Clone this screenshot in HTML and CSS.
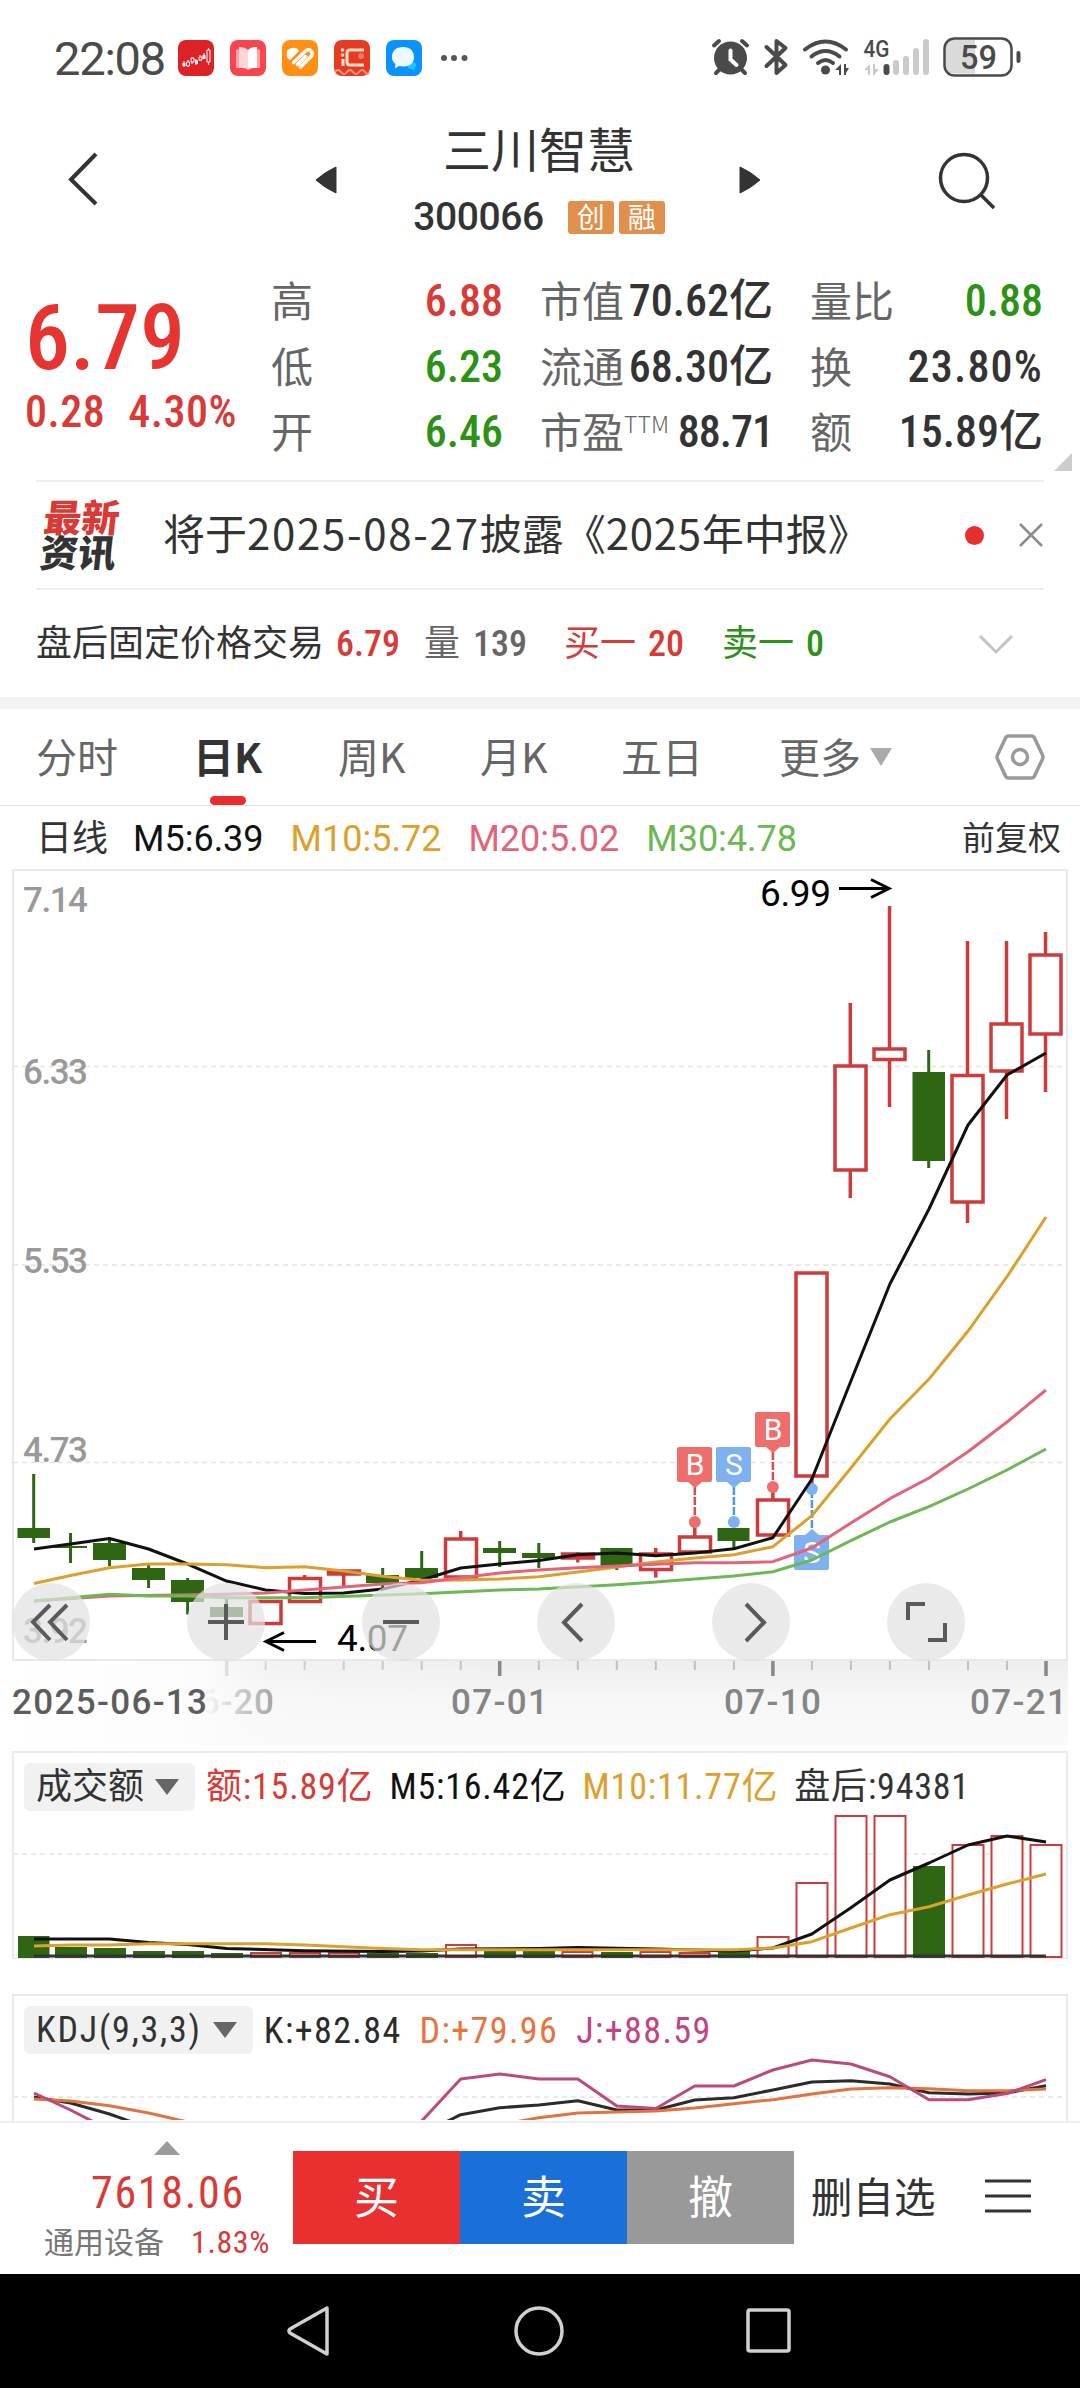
FILE: index.html
```html
<!DOCTYPE html>
<html lang="zh-CN">
<head>
    <meta charset="UTF-8">
    <meta name="viewport" content="width=device-width, initial-scale=1.0">
    <title>三川智慧 300066</title>
    <link rel="stylesheet" href="styles.css">
</head>
<body>

<div class="status-bar">
    <span class="clock">22:08</span>
    <div class="app-icons">
        <svg class="app-icon" viewBox="0 0 36 36">
            <rect width="36" height="36" rx="8" fill="#dc2226"/>
            <path d="M6 21v6M10 20v7M14 17v7M18 19v6M22 15v6M26 13v6M30.500 8v17" stroke="#fff" stroke-width="1"/>
            <path d="M4.500 23h3v3h-3zM17 20h3v4h-3zM24.500 15h3v4h-3z" fill="#fff"/>
            <path d="M8.500 22h3v4h-3zM13 18h3v4h-3zM21 17h3v3h-3zM29 10h3v12h-3z" fill="#dc2226" stroke="#fff" stroke-width="1"/>
        </svg>
        <svg class="app-icon" viewBox="0 0 36 36">
            <rect width="36" height="36" rx="8" fill="#f8454f"/>
            <path d="M6 10l3-1v19h-3zM30 10l-3-1v19h3z" fill="#fba3a8"/>
            <path d="M9 7c4 0 7 1 9 3v20c-2-2-5-2-9-2z" fill="#ffd6d8"/>
            <path d="M27 7c-4 0-7 1-9 3v20c2-2 5-2 9-2z" fill="#fff"/>
        </svg>
        <svg class="app-icon" viewBox="0 0 36 36">
            <rect width="36" height="36" rx="8" fill="#ff9014"/>
            <path d="M5 17Q3 9 10 8Q15 7 17 11L8 20Q6 19 5 17z" fill="#fff"/>
            <path d="M11.500 22.500L23 11.500Q27 8 29.500 11.500Q31 14.500 28.500 17L18.500 27M15.500 24.500L23.500 16.500" fill="none" stroke="#fff" stroke-width="3.500" stroke-linecap="round"/>
        </svg>
        <svg class="app-icon" viewBox="0 0 36 36">
            <rect width="36" height="36" rx="8" fill="#e63a22"/>
            <path d="M1 32q3-4 6 0t6 0t6 0t6 0t6 0t4 0" fill="none" stroke="#f29a80" stroke-width="2"/>
            <path d="M30 10H16q-3 0-3 3v9q0 3 3 3h14M9 19v7" fill="none" stroke="#ffe2c0" stroke-width="3"/>
            <circle cx="8.500" cy="10" r="1.800" fill="#ffe2c0"/>
            <circle cx="8.500" cy="15" r="1.800" fill="#ffe2c0"/>
            <circle cx="27" cy="16" r="3" fill="#ff7658"/>
        </svg>
        <svg class="app-icon" viewBox="0 0 36 36">
            <rect width="36" height="36" rx="8" fill="#0a93ff"/>
            <path d="M22 23q8-2 8 2 0 2-1.500 3l1 2-4-1q-3 0-4-3z" fill="#19c9f5"/>
            <path d="M17 7c7 0 11 4 11 10s-4 9.500-10 9.500l-5-.5-4 2.500 .5-4.500C7 22 6 20 6 17c0-6 4-10 11-10z" fill="#eef8ff"/>
        </svg>
    </div>
    <svg class="more-dots" width="30" height="10" viewBox="0 0 30 10" fill="#555">
        <circle cx="4" cy="5" r="3"/><circle cx="14" cy="5" r="3"/><circle cx="24.500" cy="5" r="3"/>
    </svg>
    <svg class="system-icons" width="350" height="80" viewBox="0 0 350 80">
        <g fill="none" stroke="#4a4a4a" stroke-width="4" stroke-linecap="round">
            <circle cx="40.500" cy="38" r="16.500" fill="#4a4a4a" stroke="none"/>
            <path d="M24 25.500l5-4.500M57 25.500l-5-4.500M30 49l-4 4M51 49l4 4"/>
            <path d="M40.500 30.500v9l6 5.500" stroke="#fff"/>
            <path d="M76.500 27l19 18-9 8V21l9 7-19 18" stroke-linejoin="round"/>
            <path d="M115 29.500q20.500-16 41 0M121.500 36.500q14-11 28 0M128 43q7.500-6 15 0"/>
            <circle cx="135.500" cy="50" r="4.500" fill="#4a4a4a" stroke="none"/>
        </g>
        <path d="M151 44v11h-2v-5h-4zM154 44v11h2v-2l3-5h-3v-4z" fill="#4a4a4a"/>
        <path d="M180 44v11h-2v-5h-4zM183 44v11h2v-1l4-5h-4v-5z" fill="#c9c9c9"/>
        <text class="net-type" x="173.500" y="37" textLength="26" lengthAdjust="spacingAndGlyphs">4G</text>
        <g stroke-width="6" stroke-linecap="round" stroke="#cacaca">
            <path d="M196.500 47v5" stroke="#4a4a4a"/>
            <path d="M206 43v9M216 39v13M226 31v21M236 22v30"/>
        </g>
        <path d="M264 20h21v34h-21q-9 0-9-9V29q0-9 9-9z" transform="translate(0 -0.500)" fill="#dadada"/>
        <rect x="254.500" y="18.500" width="67" height="37" rx="10" fill="none" stroke="#4a4a4a" stroke-width="2.500"/>
        <path d="M328.500 33v8" stroke="#4a4a4a" stroke-width="4" stroke-linecap="round"/>
        <text class="battery-text" x="270" y="48.500" textLength="37" lengthAdjust="spacingAndGlyphs">59</text>
    </svg>
</div>

<div class="header">
    <svg class="back" width="34" height="58" viewBox="0 0 34 58"><path d="M30 4L5 29.500L30 54" fill="none" stroke="#333" stroke-width="4"/></svg>
    <svg class="prev" width="24" height="30" viewBox="0 0 24 30"><path d="M22 2v26Q11 23 2 15Q11 7 22 2z" fill="#333" stroke="#333" stroke-linejoin="round"/></svg>
    <div class="stock">
        <div class="stock-name">三川智慧</div>
        <div class="stock-code">300066<span class="tag">创</span><span class="tag">融</span></div>
    </div>
    <svg class="next" width="24" height="30" viewBox="0 0 24 30"><path d="M2 2v26Q13 23 22 15Q13 7 2 2z" fill="#333" stroke="#333" stroke-linejoin="round"/></svg>
    <svg class="search" width="60" height="60" viewBox="0 0 60 60" fill="none" stroke="#333" stroke-width="3.500"><circle cx="27" cy="28" r="23.500"/><path d="M43 44L57 58"/></svg>
</div>

<div class="quote">
    <div class="price">
        <div class="price-now">6.79</div>
        <div class="price-change"><span>0.28</span><span>4.30%</span></div>
    </div>
    <div class="stats">
        <div class="stat"><span class="label">高</span><span class="num red">6.88</span></div>
        <div class="stat"><span class="label">市值</span><span class="num">70.62亿</span></div>
        <div class="stat"><span class="label">量比</span><span class="num green">0.88</span></div>
        <div class="stat"><span class="label">低</span><span class="num green">6.23</span></div>
        <div class="stat"><span class="label">流通</span><span class="num">68.30亿</span></div>
        <div class="stat"><span class="label">换</span><span class="num percent">23.80%</span></div>
        <div class="stat"><span class="label">开</span><span class="num green">6.46</span></div>
        <div class="stat"><span class="label">市盈<sup>TTM</sup></span><span class="num pe">88.71</span></div>
        <div class="stat"><span class="label">额</span><span class="num">15.89亿</span></div>
    </div>
    <svg class="corner" width="18" height="18" viewBox="0 0 18 18"><path d="M18 0v18H0z" fill="#ccc"/></svg>
</div>

<div class="news">
    <div class="news-logo"><div class="red">最新</div><div>资讯</div></div>
    <div class="news-text">将于<span class="date">2025-08-27</span>披露《<span class="year">2025</span>年中报》</div>
    <i class="dot"></i>
    <svg class="close" width="26" height="26" viewBox="0 0 26 26"><path d="M2 2L24 24M24 2L2 24" stroke="#8c8c8c" stroke-width="2.500"/></svg>
</div>

<div class="after-hours">
    <span>盘后固定价格交易</span>
    <b class="red">6.79</b>
    <span class="gray volume">量<b>139</b></span>
    <span class="red buy-one">买一<b>20</b></span>
    <span class="green sell-one">卖一<b>0</b></span>
    <svg class="expand" width="36" height="22" viewBox="0 0 36 22"><path d="M2 3L18 19L34 3" fill="none" stroke="#c4c4c4" stroke-width="3"/></svg>
</div>

<div class="tabs">
    <span>分时</span>
    <span class="active">日K</span>
    <span>周K</span>
    <span>月K</span>
    <span>五日</span>
    <span>更多<svg class="caret" width="22" height="18" viewBox="0 0 22 18"><path d="M0 0h22L11 18z" fill="#aaa"/></svg></span>
    <svg class="setting" width="50" height="48" viewBox="0 0 50 48" fill="none" stroke="#999" stroke-width="3.500"><path d="M13.500 3h23q2 0 3 2l8 17q1 2 0 4l-8 17q-1 2-3 2h-23q-2 0-3-2l-8-17q-1-2 0-4l8-17q1-2 3-2z"/><circle cx="25" cy="24" r="7.500"/></svg>
</div>

<div class="ma-legend">
    <span class="cn">日线</span>
    <span class="ma5">M5:6.39</span>
    <span class="ma10">M10:5.72</span>
    <span class="ma20">M20:5.02</span>
    <span class="ma30">M30:4.78</span>
    <span class="adjust">前复权</span>
</div>

<!-- 日K线 -->
<svg class="k-chart" width="1080" height="882" viewBox="0 869 1080 882">
    <defs>
        <linearGradient id="axisBg" x1="0" y1="0" x2="0" y2="1">
            <stop offset="0" stop-color="#eee"/><stop offset="0.5" stop-color="#f7f7f7"/><stop offset="1" stop-color="#fafafa"/>
        </linearGradient>
        <linearGradient id="fade" gradientUnits="userSpaceOnUse" x1="12" y1="0" x2="500" y2="0">
            <stop offset="0" stop-color="#fff"/><stop offset="0.39" stop-color="#fcfcfc"/><stop offset="0.42" stop-color="#fbfbfb" stop-opacity="0.85"/><stop offset="0.53" stop-color="#fafafa" stop-opacity="0.3"/><stop offset="1" stop-color="#fafafa" stop-opacity="0"/>
        </linearGradient>
    </defs>
    <rect x="12" y="1660" width="1056" height="85" fill="url(#axisBg)"/>
    <rect x="13" y="870" width="1054" height="790" fill="#fff" stroke="#e8e8e8" stroke-width="2"/>
    <path d="M13 1066.500H1067M13 1265H1067M13 1462.500H1067" class="grid-line"/>

    <g class="scale">
        <text x="23" y="912" textLength="65">7.14</text>
        <text x="23" y="1084" textLength="65">6.33</text>
        <text x="23" y="1273" textLength="65">5.53</text>
        <text x="23" y="1462" textLength="65">4.73</text>
        <text x="23" y="1643" textLength="65">3.92</text>
    </g>

    <!-- 阴线 -->
    <g fill="#2f6614">
        <path d="M17.500 1528h32.500v10h-32.500zM54 1546h33v2h-33zM93 1543h33v17h-33zM132 1568h33v12h-33zM171 1580h33v22h-33zM210 1607h33v10h-33zM366 1575h33v8h-33zM405 1568h33v10h-33zM483 1548h33v5h-33zM522 1553h33v5h-33zM600.500 1548h32v19h-32zM717.500 1528h32v13h-32zM912.500 1072h32.500v89h-32.500z"/>
        <path d="M33.700 1474v69M70.500 1533v30M109.500 1538v28M148.600 1565v23M187.600 1578v36.500M226.600 1597v20M382.700 1568v20M421.700 1551v29M499.700 1541v26M538.800 1543v25M616.800 1548v22M733.900 1528v22M928.700 1050v118" stroke="#2f6614" stroke-width="3"/>
    </g>

    <!-- 阳线 -->
    <g fill="#fff" stroke="#ce3b3b" stroke-width="3.500">
        <path d="M304.600 1575v4M343.700 1572v14M460.700 1531v8M577.800 1552v10.500M655.800 1548v29.500M694.800 1525v12M772.900 1490v10M811.900 1476v10M850.300 1003v195M889.500 906v201M967.500 941v282M1006.500 941v178M1045.500 932v160"/>
        <path d="M250 1601.500h31v22h-31zM289.500 1578.500h31v23h-31zM445.500 1539h31v38h-31zM640.500 1554h31v15.500h-31zM679.500 1537h31v15h-31zM757.500 1500h31v35h-31zM796 1273h31v203h-31zM835 1066h31v104h-31zM874 1049h31v10.500h-31zM952 1075.500h31v126.500h-31zM991 1024h31v47h-31zM1030 955h31v79h-31z"/>
        <path d="M328.500 1571h31v3h-31zM562.500 1554h31v4h-31z" fill="#ce3b3b"/>
    </g>

    <!-- 买卖点 -->
    <g class="mark">
        <path d="M694.800 1487v34M772.900 1452v34" stroke="#e04a4a" stroke-width="2.500" stroke-dasharray="8 2"/>
        <path d="M733.900 1487v34M811.900 1490v40" stroke="#4f96e6" stroke-width="2.500" stroke-dasharray="8 2"/>
        <g fill="#ee6d6d">
            <rect x="677" y="1447" width="35" height="35" rx="2"/><path d="M688 1482h14l-7 6z"/><circle cx="694.800" cy="1522" r="6"/>
            <rect x="755" y="1412" width="35" height="35" rx="2"/><path d="M766 1447h14l-7 6z"/><circle cx="772.900" cy="1487" r="6"/>
        </g>
        <g fill="#7db1f0">
            <rect x="716" y="1447" width="35" height="35" rx="2"/><path d="M727 1482h14l-7 6z"/><circle cx="733.900" cy="1522" r="6"/>
            <rect x="794" y="1535" width="35" height="35" rx="2"/><path d="M805 1535h14l-7-6z"/><circle cx="811.900" cy="1489" r="6"/>
        </g>
        <text x="695" y="1475">B</text>
        <text x="734" y="1475">S</text>
        <text x="773" y="1440">B</text>
        <text x="812" y="1563">S</text>
    </g>

    <!-- 均线 -->
    <g fill="none" stroke-width="3" stroke-linejoin="round">
        <polyline stroke="#111" points="34,1549 70.500,1544 109.500,1538.500 148.600,1549 187.600,1564 226.600,1581 265.600,1590 304.600,1593.500 343.700,1593 382.700,1589 421.700,1580 460.700,1568 499.700,1564 538.800,1560.500 577.800,1554.700 616.800,1553 655.800,1555.700 694.800,1553 733.900,1548.700 772.900,1537.700 811.900,1479 850.900,1381 889.900,1284 929,1209 968,1125 1007,1075 1046,1053"/>
        <polyline stroke="#dda02c" points="34,1583.500 70.500,1575.500 109.500,1567.700 148.600,1564 187.600,1564 226.600,1564.700 265.600,1567.700 304.600,1566.700 343.700,1571 382.700,1576.300 421.700,1580.300 460.700,1580 499.700,1579 538.800,1576.800 577.800,1572 616.800,1567 655.800,1562 694.800,1558 733.900,1554.700 772.900,1546.700 811.900,1515.700 850.900,1468 889.900,1419 929,1379 968,1331 1007,1276.700 1046,1217"/>
        <polyline stroke="#e2637a" points="34,1601 109.500,1596 226.600,1594.300 265.600,1593 304.600,1590 382.700,1584 421.700,1582.700 460.700,1577.700 499.700,1573 538.800,1570 577.800,1567.700 616.800,1566 655.800,1564.300 694.800,1562.700 733.900,1562.700 772.900,1561.700 811.900,1548 850.900,1523 889.900,1498.700 929,1478 968,1451.700 1007,1422 1046,1390"/>
        <polyline stroke="#6cb852" points="34,1601 70.500,1597.700 109.500,1594.300 148.600,1596 187.600,1596 226.600,1597.700 304.600,1597.700 421.700,1593.700 499.700,1590 538.800,1589 616.800,1584.700 655.800,1582 694.800,1579 733.900,1576 772.900,1571.700 811.900,1560 850.900,1540.700 889.900,1522 929,1506.700 968,1489 1007,1470 1046,1449"/>
    </g>

    <!-- 最高 / 最低 -->
    <g class="peak" fill="none" stroke="#000" stroke-width="3">
        <path d="M839 888.500H888M871 879.500L889 888.500L871 897.500"/>
        <path d="M316 1641.500H267M284 1632.500L266 1641.500L284 1650.500"/>
        <text x="760" y="906" textLength="71">6.99</text>
        <text x="337" y="1651" textLength="71">4.07</text>
    </g>

    <!-- 操作按钮 -->
    <g fill="#e2e2e2" fill-opacity="0.71">
        <circle cx="51" cy="1622" r="39"/><circle cx="226" cy="1622" r="39"/><circle cx="401" cy="1622" r="39"/>
        <circle cx="576" cy="1622" r="39"/><circle cx="751" cy="1622" r="39"/><circle cx="926" cy="1622" r="39"/>
    </g>
    <path d="M50 1605L33 1622L50 1640M67 1605L50 1622L67 1640M208 1622H244M226 1604V1640M383 1622H419M582 1604L564 1622.500L582 1641M746 1604L764 1622.500L746 1641M925 1604H908V1620M928 1640H945V1623" fill="none" stroke="#5a5a5a" stroke-width="4"/>

    <!-- 日期轴 -->
    <path d="M265.600 1661v9M304.600 1661v9M343.700 1661v9M382.700 1661v9M421.700 1661v9M460.700 1661v9M538.800 1661v9M577.800 1661v9M616.800 1661v9M655.800 1661v9M694.800 1661v9M733.900 1661v9M811.900 1661v9M850.900 1661v9M889.900 1661v9M929 1661v9M968 1661v9M1007 1661v9" stroke="#c0c0c0" stroke-width="2"/>
    <path d="M226.600 1661v15M499.700 1661v15M772.900 1661v15M1046 1661v15" stroke="#888" stroke-width="3.500"/>
    <g class="dates">
        <text x="179" y="1714" textLength="95">06-20</text>
        <rect x="12" y="1661" width="488" height="84" fill="url(#fade)"/>
        <text class="first" x="12" y="1714" textLength="195">2025-06-13</text>
        <text x="451" y="1714" textLength="97">07-01</text>
        <text x="724" y="1714" textLength="97">07-10</text>
        <text x="970" y="1714" textLength="97">07-21</text>
    </g>
</svg>

<div class="panel volume-panel">
    <div class="panel-head">
        <span class="picker">成交额<svg width="24" height="16" viewBox="0 0 24 16"><path d="M0 0h24L12 16z" fill="#666"/></svg></span>
        <span class="red">额:15.89亿</span>
        <span class="ma5">M5:16.42亿</span>
        <span class="ma10">M10:11.77亿</span>
        <span class="after">盘后:94381</span>
    </div>
    <svg class="panel-chart" width="1056" height="208" viewBox="12 1751 1056 208">
        <path d="M13 1854H1068" class="grid-line"/>
        <path fill="#2f6614" d="M18 1936h31.500v22h-31.500zM55 1947h32v11h-32zM94 1948h32v10h-32zM133 1951h32v7h-32zM172 1951h32v7h-32zM211 1953h32v5h-32zM367 1953h32v5h-32zM406 1953h32v5h-32zM484 1949h32v9h-32zM523 1951h32v7h-32zM601 1952h32v6h-32zM718 1951h32v7h-32zM913 1866h32v92h-32z"/>
        <path fill="#fff" stroke="#ce3b3b" stroke-width="2" d="M251 1953h30v4h-30zM290 1953h30v4h-30zM329 1953h30v4h-30zM446 1945h30v12h-30zM562.500 1952h30v5h-30zM640.500 1952h30v5h-30zM679.500 1953h30v4h-30zM757.500 1937h31v20h-31zM796.500 1883h31v74h-31zM835.500 1816h31v141h-31zM874.500 1816h31v141h-31zM952.500 1845h31v112h-31zM991.500 1836h31v121h-31zM1030.500 1845h31v112h-31z"/>
        <path d="M34 1956H1046" stroke="#333" stroke-width="3"/>
        <g fill="none" stroke-width="3" stroke-linejoin="round">
            <polyline stroke="#111" points="34,1939 109.500,1939 148.600,1942.500 187.600,1944.500 226.600,1948.500 304.600,1950.700 382.700,1951.500 421.700,1951 460.700,1949 538.800,1948.500 577.800,1947.500 655.800,1949 733.900,1951 772.900,1948 811.900,1934 850.900,1907.700 889.900,1880 929,1863 968,1845 1007,1836 1046,1842"/>
            <polyline stroke="#dda02c" points="34,1946 70.500,1945 109.500,1945 148.600,1943.700 265.600,1943.700 304.600,1945 343.700,1946.700 382.700,1948.500 421.700,1949.700 733.900,1949.700 772.900,1948 811.900,1941.700 850.900,1928 889.900,1914.700 929,1906.700 968,1895 1007,1884 1046,1874"/>
        </g>
    </svg>
</div>

<div class="panel kdj-panel">
    <div class="panel-head">
        <span class="picker">KDJ(9,3,3)<svg width="24" height="16" viewBox="0 0 24 16"><path d="M0 0h24L12 16z" fill="#666"/></svg></span>
        <span class="k">K:+82.84</span>
        <span class="d">D:+79.96</span>
        <span class="j">J:+88.59</span>
    </div>
    <svg class="panel-chart" width="1056" height="126" viewBox="12 1994 1056 126">
        <path d="M13 2097H1068" class="grid-line"/>
        <g fill="none" stroke-width="3" stroke-linejoin="round">
            <polyline stroke="#2b2b2b" points="34,2097 70.500,2103 109.500,2114 148.600,2128 304.600,2180 421.700,2134 460.700,2114.700 499.700,2107.700 538.800,2105 577.800,2100.700 616.800,2110 655.800,2110 694.800,2100 733.900,2097.700 772.900,2090 811.900,2082 850.900,2080.700 889.900,2084 929,2092.700 968,2094 1007,2093 1046,2085.700"/>
            <polyline stroke="#e2733f" points="34,2099 70.500,2101 109.500,2105.700 148.600,2113 187.600,2122 304.600,2170 460.700,2140 499.700,2124.700 538.800,2117.700 577.800,2113 616.800,2112 655.800,2111 694.800,2108 733.900,2103.700 772.900,2099.700 811.900,2094 850.900,2089 889.900,2087.700 929,2088.700 968,2090.700 1007,2090.700 1046,2089"/>
            <polyline stroke="#bb4a7f" points="34,2093 70.500,2110 109.500,2130 304.600,2220 421.700,2121 460.700,2079 499.700,2074 538.800,2079 577.800,2079 616.800,2106 655.800,2108.500 694.800,2086 733.900,2086 772.900,2070 811.900,2060 850.900,2064 889.900,2076.700 929,2099.700 968,2099.700 1007,2093.500 1046,2079.700"/>
        </g>
    </svg>
</div>

<div class="trade-bar">
    <div class="sector">
        <svg width="26" height="14" viewBox="0 0 26 14"><path d="M13 0L26 14H0z" fill="#9b9b9b"/></svg>
        <div class="sector-index">7618.06</div>
        <div class="sector-name">通用设备<span>1.83%</span></div>
    </div>
    <div class="btn btn-buy">买</div>
    <div class="btn btn-sell">卖</div>
    <div class="btn btn-cancel">撤</div>
    <div class="remove">删自选</div>
    <svg class="menu" width="46" height="34" viewBox="0 0 46 34"><path d="M0 2H46M0 17H46M0 32H46" stroke="#333" stroke-width="3"/></svg>
</div>

<div class="nav-bar">
    <svg width="46" height="54" viewBox="0 0 46 54"><path d="M41 4v46L4 29q-2-2 0-4z" fill="none" stroke="#d0d0d0" stroke-width="3.500" stroke-linejoin="round"/></svg>
    <svg width="54" height="54" viewBox="0 0 54 54"><circle cx="27" cy="27" r="23" fill="none" stroke="#d0d0d0" stroke-width="3.500"/></svg>
    <svg width="46" height="50" viewBox="0 0 46 50"><rect x="3" y="4" width="41" height="41" rx="2" fill="none" stroke="#d0d0d0" stroke-width="3.500"/></svg>
</div>

</body>
</html>
```
FILE: styles.css
```css
* {
    box-sizing: border-box;
}
body {
    margin: 0;
    width: 1080px;
    background: #fff;
    color: #333;
    font-family: "Roboto Condensed", "Noto Sans CJK SC", sans-serif;
}
svg {
    display: block;
    flex: none;
}
.red { color: #d93a36; }
.green { color: #2b9216; }
.gray { color: #666; }
.ma5 { color: #111; }
.ma10 { color: #dda02c; }
.ma20 { color: #e2637a; }
.ma30 { color: #6cb852; }

.status-bar {
    display: flex;
    align-items: center;
    height: 116px;
    padding-left: 54px;
}
.clock {
    width: 124px;
    font: 47px/1 Roboto, sans-serif;
    letter-spacing: -1.2px;
    color: #4a4a4a;
}
.app-icons {
    display: flex;
    gap: 16px;
}
.app-icon {
    width: 36px;
    height: 36px;
}
.more-dots {
    margin-left: 18px;
}
.system-icons {
    margin-left: auto;
    margin-right: 40px;
    margin-top: 4px;
}
.net-type {
    font: 500 24px Roboto, sans-serif;
    fill: #4a4a4a;
}
.battery-text {
    font: 500 33px Roboto, sans-serif;
    fill: #4a4a4a;
}

.header {
    display: flex;
    height: 144px;
    padding-left: 66px;
}
.back { margin-top: 34px; }
.prev { margin: 49px 0 0 214px; }
.stock {
    width: 400px;
    text-align: center;
}
.stock-name {
    margin-top: 5px;
    padding-left: 2px;
    font-size: 48px;
    line-height: 62px;
}
.stock-code {
    display: flex;
    justify-content: center;
    align-items: center;
    padding-left: 2px;
    font: 500 39px/44px Roboto, sans-serif;
    letter-spacing: -0.4px;
    margin-top: 12px;
}
.tag {
    width: 46px;
    height: 33px;
    margin-left: 5px;
    background: #e0904b;
    color: #fff;
    border-radius: 3px;
    font: 28px/31px "Noto Sans CJK SC", sans-serif;
    letter-spacing: 0;
}
.tag:first-child { margin-left: 24px; }
.next { margin-top: 49px; }
.search { margin: 34px 0 0 175px; }

.quote {
    position: relative;
    display: flex;
    height: 220px;
    padding-top: 7px;
}
.price {
    width: 271px;
    padding-left: 25px;
    color: #e63431;
}
.price-now {
    margin-top: 17px;
    font-weight: 500;
    font-size: 90px;
    line-height: 110px;
}
.price-change {
    display: flex;
    gap: 23px;
    margin-top: -4px;
    font-weight: 500;
    font-size: 44px;
    line-height: 44px;
    letter-spacing: 0.5px;
    color: #d93a36;
}
.stats {
    display: grid;
    grid-template-columns: 232px 233px 233px;
    column-gap: 37px;
    grid-auto-rows: 65.500px;
}
.stat {
    display: flex;
    justify-content: space-between;
    line-height: 64px;
    white-space: nowrap;
}
.label {
    font-family: "Noto Sans CJK SC", sans-serif;
    font-size: 42px;
    color: #666;
}
.label sup {
    font-size: 23px;
    font-weight: 300;
    line-height: 0;
    vertical-align: 15px;
}
.num {
    padding-top: 2px;
    font-weight: 500;
    font-size: 44px;
}
.percent { letter-spacing: 1.2px; }
.pe { letter-spacing: -1px; }
.corner {
    position: absolute;
    right: 8px;
    bottom: 9px;
}

.news, .after-hours {
    display: flex;
    align-items: center;
    margin: 0 36px;
    border-top: 2px solid #eee;
}
.news { height: 108px; }
.news-logo {
    width: 127px;
    padding: 0 0 5px 6px;
    font: 900 38px/35px "Noto Sans CJK SC", sans-serif;
    transform: skewX(-6deg);
}
.news-text {
    padding-bottom: 8px;
    font-size: 42px;
    font-family: "Noto Sans CJK SC", sans-serif;
    white-space: nowrap;
}
.date { letter-spacing: 1.7px; }
.year { letter-spacing: 0.7px; }
.dot {
    width: 19px;
    height: 19px;
    margin-left: auto;
    margin-right: 34px;
    border-radius: 50%;
    background: #e62e2e;
}
.after-hours {
    height: 109px;
    font-size: 36px;
    align-items: baseline;
    line-height: 109px;
}
.after-hours b {
    font-weight: 500;
}
.after-hours > b { margin-left: 12px; }
.volume { margin-left: 24px; }
.volume b { margin-left: 13px; }
.buy-one { margin-left: 37px; }
.sell-one { margin-left: 38px; }
.buy-one b, .sell-one b { margin-left: 12px; }
.expand {
    align-self: center;
    margin-left: auto;
    margin-right: 30px;
}

.tabs {
    display: grid;
    grid-template-columns: 157px 145px 142px 141px 158px 1fr 50px;
    align-items: center;
    height: 109px;
    border-top: 12px solid #f3f3f3;
    border-bottom: 1px solid #e3e3e3;
    padding: 0 35px 0 36px;
    font-family: "Noto Sans CJK SC", sans-serif;
    font-size: 41px;
    color: #666;
}
.tabs > span {
    display: flex;
    align-items: center;
    height: 96px;
    padding-bottom: 5px;
    line-height: 88px;
}
.caret { margin: 5px 0 0 9px; }
.tabs .active {
    position: relative;
    color: #333;
    font-weight: 700;
}
.active::after {
    content: "";
    position: absolute;
    left: 17px;
    bottom: 0;
    width: 36px;
    height: 9px;
    border-radius: 5px;
    background: #e62e2e;
}

.ma-legend {
    display: flex;
    align-items: center;
    height: 63px;
    padding: 2px 19px 0 36px;
    gap: 27px;
    font: 36px/60px Roboto, "Noto Sans CJK SC", sans-serif;
}
.ma-legend .ma5 { margin-left: -2px; }
.adjust {
    margin-left: auto;
    font-size: 33px;
}

.grid-line {
    stroke: #e4e4e4;
    stroke-width: 1.5;
    stroke-dasharray: 5 4;
}
.scale text {
    font: 500 35px Roboto, sans-serif;
    fill: #999;
}
.mark text {
    font: 30px Roboto, sans-serif;
    fill: #fff;
    text-anchor: middle;
}
.peak text {
    font: 37px Roboto, sans-serif;
    fill: #000;
    stroke: none;
}
.dates text {
    font: 500 35px Roboto, sans-serif;
    fill: #858585;
}
.dates .first {
    fill: #5c5c5c;
}

.panel {
    position: relative;
    margin: 0 12px;
    border: 2px solid #eaeaea;
}
.volume-panel {
    height: 208px;
    border-bottom-width: 1px;
}
.kdj-panel {
    height: 127px;
    margin-top: 35px;
    border-bottom: 0;
    overflow: hidden;
}
.panel-head {
    display: flex;
    align-items: center;
    height: 48px;
    margin: 10px 10px 0;
    font-size: 36px;
    line-height: 48px;
    letter-spacing: 0.8px;
    white-space: nowrap;
}
.panel-head > span {
    height: 48px;
    margin-right: 16px;
}
.panel-head .picker {
    display: flex;
    align-items: center;
    gap: 11px;
    margin-right: 11px;
    padding: 0 16px 0 12px;
    border-radius: 6px;
    background: #f1f1f1;
    letter-spacing: 0;
}
.kdj-panel .panel-head {
    line-height: 50px;
    letter-spacing: 1.4px;
}
.kdj-panel .panel-head > span { margin-right: 18px; }
.kdj-panel .panel-head .picker {
    margin-right: 11px;
    letter-spacing: 1.8px;
}
/* 曲线叠在面板标题之上 */
.panel-chart {
    position: absolute;
    left: -2px;
    top: -2px;
}
.k { color: #2b2b2b; }
.d { color: #e8733f; }
.j { color: #c2457f; }

.trade-bar {
    display: flex;
    height: 153px;
    padding-top: 28px;
    border-top: 2px solid #eee;
}
.sector {
    width: 293px;
    margin-top: -10px;
    padding-left: 44px;
}
.sector svg { margin-left: 110px; }
.sector-index {
    margin: 15px 0 0 47px;
    font-size: 44px;
    line-height: 46px;
    letter-spacing: 1.7px;
    color: #d93a36;
}
.sector-name {
    margin-top: 6px;
    font-size: 30px;
    line-height: 40px;
    color: #777;
}
.sector-name span {
    margin-left: 27px;
    font-size: 32px;
    letter-spacing: 0.6px;
    color: #d93a36;
}
.btn {
    width: 167px;
    height: 93px;
    color: #fff;
    font-size: 45px;
    line-height: 95px;
    text-align: center;
}
.btn-buy { background: #e83030; }
.btn-sell { background: #1a70d8; }
.btn-cancel { background: #999; }
.remove {
    margin-left: 17px;
    font-size: 41.500px;
    line-height: 96px;
}
.menu { margin: 28px 0 0 49px; }

.nav-bar {
    display: flex;
    align-items: center;
    justify-content: space-between;
    height: 114px;
    padding: 0 289px 0 286px;
    background: #000;
}
```
